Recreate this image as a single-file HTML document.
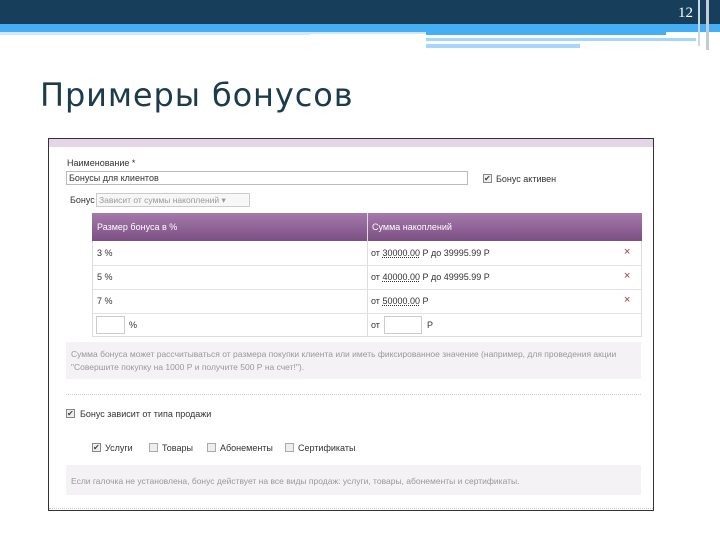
<!DOCTYPE html>
<html><head><meta charset="utf-8"><style>
*{margin:0;padding:0;box-sizing:border-box}
body{width:720px;height:540px;background:#fff;position:relative;overflow:hidden;font-family:"Liberation Sans","DejaVu Sans",sans-serif}
.a{position:absolute}
.s{font-size:9px;color:#333}
.g{font-size:8.5px;color:#999}
</style></head><body>
<div class="a" style="left:0;top:0;width:720px;height:24px;background:#173f5c"></div>
<div class="a" style="left:0;top:24px;width:720px;height:8px;background:#45aef5"></div>
<div class="a" style="left:0;top:32px;width:310px;height:3px;background:#cfe8fb"></div>
<div class="a" style="left:310px;top:32px;width:300px;height:2px;background:#cfe8fb"></div>
<div class="a" style="left:426px;top:32px;width:240px;height:3px;background:#45aef5"></div>
<div class="a" style="left:426px;top:38px;width:270px;height:3px;background:#a6d6fa"></div>
<div class="a" style="left:426px;top:44px;width:154px;height:4px;background:#a6d6fa"></div>
<div class="a" style="left:698px;top:0;width:2px;height:46px;background:#c8d8e4"></div>
<div class="a" style="left:706px;top:0;width:3px;height:50px;background:#c0ccd6"></div>
<div class="a" style="left:678px;top:5px;color:#fff;font-family:'Liberation Serif',serif;font-size:15px">12</div>
<div class="a" style="left:40px;top:76px;font-size:32px;color:#1b3c4c;font-family:'DejaVu Sans',sans-serif;letter-spacing:0.9px">Примеры бонусов</div>

<div class="a" style="left:48px;top:138px;width:606px;height:373px;border:1px solid #333;background:#fff"></div>
<div class="a" style="left:49px;top:139px;width:604px;height:8px;background:#e4d6e8"></div>
<div class="a s" style="left:67px;top:158px">Наименование *</div>
<div class="a" style="left:66px;top:171px;width:402px;height:14px;border:1px solid #bbb"></div>
<div class="a s" style="left:69px;top:173px">Бонусы для клиентов</div>
<div class="a" style="left:483px;top:174px;width:9px;height:9px;border:1px solid #888;background:#eee;font-size:8px;line-height:7px;color:#444">✔</div>
<div class="a s" style="left:496px;top:174px">Бонус активен</div>
<div class="a s" style="left:70px;top:195px">Бонус</div>
<div class="a" style="left:96px;top:193px;width:154px;height:14px;border:1px solid #ccc;background:#f7f7f7"></div>
<div class="a g" style="left:99px;top:195px">Зависит от суммы накоплений ▾</div>

<div class="a" style="left:92px;top:213px;width:550px;height:124px;border:1px solid #ddd"></div>
<div class="a" style="left:92px;top:213px;width:550px;height:28px;background:linear-gradient(#a47aaa,#7c4f84)"></div>
<div class="a" style="left:367px;top:213px;width:1px;height:124px;background:#ddd"></div>
<div class="a" style="left:97px;top:222px;font-size:9px;color:#fff">Размер бонуса в %</div>
<div class="a" style="left:372px;top:222px;font-size:9px;color:#fff">Сумма накоплений</div>
<div class="a" style="left:92px;top:265px;width:550px;height:1px;background:#e2e2e2"></div>
<div class="a" style="left:92px;top:289px;width:550px;height:1px;background:#e2e2e2"></div>
<div class="a" style="left:92px;top:313px;width:550px;height:1px;background:#e2e2e2"></div>
<div class="a s" style="left:97px;top:248px">3 %</div>
<div class="a s" style="left:97px;top:272px">5 %</div>
<div class="a s" style="left:97px;top:296px">7 %</div>
<div class="a s" style="left:371px;top:248px">от <u style="text-decoration:underline dotted">30000.00</u> Р до 39995.99 Р</div>
<div class="a s" style="left:371px;top:272px">от <u style="text-decoration:underline dotted">40000.00</u> Р до 49995.99 Р</div>
<div class="a s" style="left:371px;top:296px">от <u style="text-decoration:underline dotted">50000.00</u> Р</div>
<div class="a" style="left:624px;top:246px;font-size:11px;color:#a33">×</div>
<div class="a" style="left:624px;top:270px;font-size:11px;color:#a33">×</div>
<div class="a" style="left:624px;top:294px;font-size:11px;color:#a33">×</div>
<div class="a" style="left:96px;top:316px;width:29px;height:18px;border:1px solid #ccc"></div>
<div class="a s" style="left:129px;top:320px">%</div>
<div class="a s" style="left:371px;top:320px">от</div>
<div class="a" style="left:384px;top:316px;width:38px;height:18px;border:1px solid #ccc"></div>
<div class="a s" style="left:427px;top:320px">Р</div>

<div class="a" style="left:66px;top:342px;width:575px;height:37px;background:#f4f2f4"></div>
<div class="a g" style="left:71px;top:348px;width:566px;line-height:13px">Сумма бонуса может рассчитываться от размера покупки клиента или иметь фиксированное значение (например, для проведения акции "Совершите покупку на 1000 Р и получите 500 Р на счет!").</div>
<div class="a" style="left:66px;top:394px;width:575px;border-top:1px dotted #ccc"></div>
<div class="a" style="left:66px;top:409px;width:9px;height:9px;border:1px solid #888;background:#eee;font-size:8px;line-height:7px;color:#444">✔</div>
<div class="a s" style="left:80px;top:409px">Бонус зависит от типа продажи</div>
<div class="a" style="left:92px;top:443px;width:9px;height:9px;border:1px solid #888;background:#eee;font-size:8px;line-height:7px;color:#444">✔</div>
<div class="a s" style="left:105px;top:443px">Услуги</div>
<div class="a" style="left:149px;top:443px;width:9px;height:9px;border:1px solid #aaa;background:#eee"></div>
<div class="a s" style="left:162px;top:443px">Товары</div>
<div class="a" style="left:207px;top:443px;width:9px;height:9px;border:1px solid #aaa;background:#eee"></div>
<div class="a s" style="left:220px;top:443px">Абонементы</div>
<div class="a" style="left:285px;top:443px;width:9px;height:9px;border:1px solid #aaa;background:#eee"></div>
<div class="a s" style="left:298px;top:443px">Сертификаты</div>
<div class="a" style="left:66px;top:465px;width:575px;height:30px;background:#f4f2f4"></div>
<div class="a g" style="left:71px;top:476px">Если галочка не установлена, бонус действует на все виды продаж: услуги, товары, абонементы и сертификаты.</div>
<div class="a" style="left:49px;top:508px;width:604px;border-top:1px dotted #ccc"></div>
</body></html>
